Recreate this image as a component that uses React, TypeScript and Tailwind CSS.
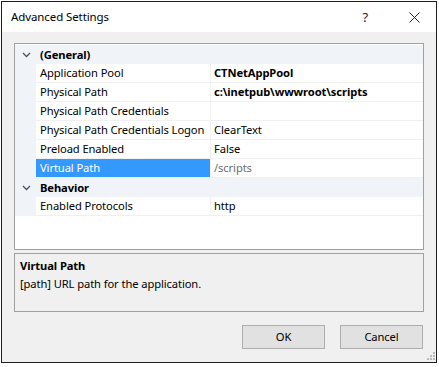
const font = { fontFamily: '"Noto Sans", "Open Sans", sans-serif' };

type Row =
  | { kind: "cat"; label: string }
  | { kind: "prop"; name: string; value: string; bold?: boolean; selected?: boolean; scribble?: boolean };

const rows: Row[] = [
  { kind: "cat", label: "(General)" },
  { kind: "prop", name: "Application Pool", value: "CTNetAppPool", bold: true },
  { kind: "prop", name: "Physical Path", value: "c:\\inetpub\\wwwroot\\scripts", bold: true, scribble: true },
  { kind: "prop", name: "Physical Path Credentials", value: "" },
  { kind: "prop", name: "Physical Path Credentials Logon", value: "ClearText" },
  { kind: "prop", name: "Preload Enabled", value: "False" },
  { kind: "prop", name: "Virtual Path", value: "/scripts", selected: true },
  { kind: "cat", label: "Behavior" },
  { kind: "prop", name: "Enabled Protocols", value: "http" },
];

function Chevron() {
  return (
    <svg width="9" height="6" viewBox="0 0 9 6" className="text-[#505050]">
      <polyline points="1,1 4.5,4.5 8,1" fill="none" stroke="currentColor" strokeWidth="1.3" />
    </svg>
  );
}

function GridRow({ row }: { row: Row }) {
  if (row.kind === "cat") {
    return (
      <div className="flex h-[19px] items-center bg-[#f0f4f9]">
        <div className="flex w-[21px] shrink-0 justify-center pl-[2px]">
          <Chevron />
        </div>
        <span className="pl-[4px] font-bold text-black">{row.label}</span>
      </div>
    );
  }
  return (
    <div className="flex h-[19px] bg-[#f0f4f9]">
      <div className="w-[21px] shrink-0" />
      <div
        className={`flex w-[174px] shrink-0 items-center overflow-hidden whitespace-nowrap border-b border-[#f0f0f0] pl-[4px] ${
          row.selected ? "bg-[#3399ff] text-white" : "bg-white text-black"
        }`}
      >
        {row.name}
      </div>
      <div className="relative flex flex-1 items-center whitespace-nowrap border-b border-l border-[#f0f0f0] bg-white pl-[3px]">
        <span className={row.bold ? "font-bold text-black" : row.selected ? "text-[#6d6d6d]" : "text-black"}>
          {row.value}
        </span>
        {row.scribble && (
          <svg className="absolute left-[1px] top-[19px]" width="18" height="5" viewBox="0 0 18 5">
            <path d="M1 3.2 C5 2.6 10 2.2 16 1.4" fill="none" stroke="#111" strokeWidth="1.6" strokeLinecap="round" />
          </svg>
        )}
      </div>
    </div>
  );
}

export default function App() {
  return (
    <div
      className="min-h-screen bg-white pl-[1px] pt-[1px] text-[11.2px] leading-none tracking-[-0.1px]"
      style={font}
    >
      <div className="flex h-[362px] w-[436px] flex-col border border-[#1e1e1e] bg-[#f0f0f0]">
        <div className="flex h-[30px] shrink-0 items-center bg-white pl-[9px]">
          <span className="text-[11.5px] text-black">Advanced Settings</span>
          <span className="ml-auto mr-[41px] text-[13px] text-[#222]">?</span>
          <svg width="11" height="11" viewBox="0 0 11 11" className="mr-[16px]">
            <path d="M0.5 0.5 L10.5 10.5 M10.5 0.5 L0.5 10.5" stroke="#222" strokeWidth="1" />
          </svg>
        </div>

        <div className="relative flex flex-1 flex-col px-[12px] pt-[11px]">
          <div className="flex h-[207px] flex-col border border-[#a0a0a0] bg-white pt-[1px]">
            {rows.map((r, i) => (
              <GridRow key={i} row={r} />
            ))}
          </div>

          <div className="mt-[3px] flex h-[59px] flex-col gap-[7px] border border-[#a0a0a0] bg-[#f0f0f0] pl-[5px] pt-[6px]">
            <span className="font-bold text-black">Virtual Path</span>
            <span className="text-black">[path] URL path for the application.</span>
          </div>

          <div className="mt-[13px] flex justify-end gap-[15px] pr-[1px]">
            <button className="h-[24px] w-[83px] border border-[#adadad] bg-[#e1e1e1] text-black">OK</button>
            <button className="h-[24px] w-[83px] border border-[#adadad] bg-[#e1e1e1] text-black">Cancel</button>
          </div>

          <svg className="absolute bottom-[1px] right-[1px]" width="10" height="10" viewBox="0 0 10 10">
            {[
              [8, 0],
              [8, 3],
              [5, 3],
              [8, 6],
              [5, 6],
              [2, 6],
            ].map(([x, y], i) => (
              <rect key={i} x={x} y={y + 1} width="2" height="2" fill="#b8b8b8" />
            ))}
          </svg>
        </div>
      </div>
    </div>
  );
}
